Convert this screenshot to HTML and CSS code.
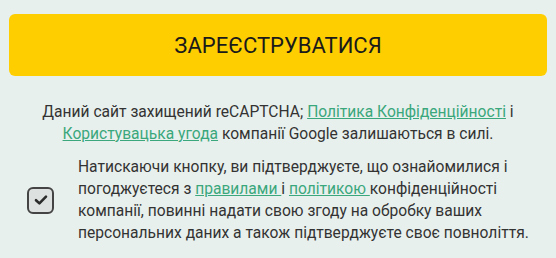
FILE: index.html
```html
<!DOCTYPE html>
<html lang="uk">
<head>
    <meta charset="UTF-8">
    <meta name="viewport" content="width=device-width, initial-scale=1.0">
    <title>Реєстрація</title>
    <link rel="stylesheet" href="styles.css">
</head>
<body>

    <!-- Submit -->
    <button class="register-btn" type="submit">Зареєструватися</button>

    <!-- reCAPTCHA note -->
    <p class="captcha-note">
        Даний сайт захищений reCAPTCHA; <a href="#">Політика Конфіденційності</a> і
        <a href="#">Користувацька угода</a> компанії Google залишаються в силі.
    </p>

    <!-- Agreement -->
    <label class="agree">
        <span class="agree-box">
            <svg width="16" height="16" viewBox="0 0 16 16">
                <path d="M3 8.2 L6.4 11.4 L13 4.6" fill="none" stroke="#2b2b2b" stroke-width="2.6" stroke-linecap="round" stroke-linejoin="round"/>
            </svg>
        </span>
        <span class="agree-text">
            Натискаючи кнопку, ви підтверджуєте, що ознайомилися і погоджуєтеся з
            <a href="#">правилами&nbsp;</a>і <a href="#">політикою&nbsp;</a>конфіденційності компанії, повинні надати
            свою згоду на обробку ваших персональних даних а також підтверджуєте своє повноліття.
        </span>
    </label>

</body>
</html>
```

FILE: styles.css
```css
body {
    margin: 0;
    padding: 14px 9px;
    background-color: #e8f0ed;
    font-family: Roboto, "Liberation Sans", sans-serif;
    color: #333;
}

.register-btn {
    display: block;
    width: 100%;
    height: 62px;
    border: none;
    border-radius: 6px;
    background-color: #ffce00;
    color: #1a1a1a;
    font-family: inherit;
    font-size: 22px;
    text-transform: uppercase;
    cursor: pointer;
}

a {
    color: #3aa77c;
    text-decoration: underline;
}

.captcha-note {
    margin: 25px 0 0;
    padding: 0 24px;
    text-align: center;
    font-size: 15.6px;
    line-height: 22px;
}

.agree {
    display: flex;
    align-items: center;
    margin-top: 11px;
    padding-left: 18px;
    cursor: pointer;
}

.agree-box {
    flex-shrink: 0;
    display: flex;
    align-items: center;
    justify-content: center;
    width: 23px;
    height: 23px;
    border: 2px solid #444;
    border-radius: 6px;
    background-color: #dde2e0;
    margin-right: 24px;
}

.agree-text {
    font-size: 15.6px;
    line-height: 22px;
    padding-right: 10px;
}
```
